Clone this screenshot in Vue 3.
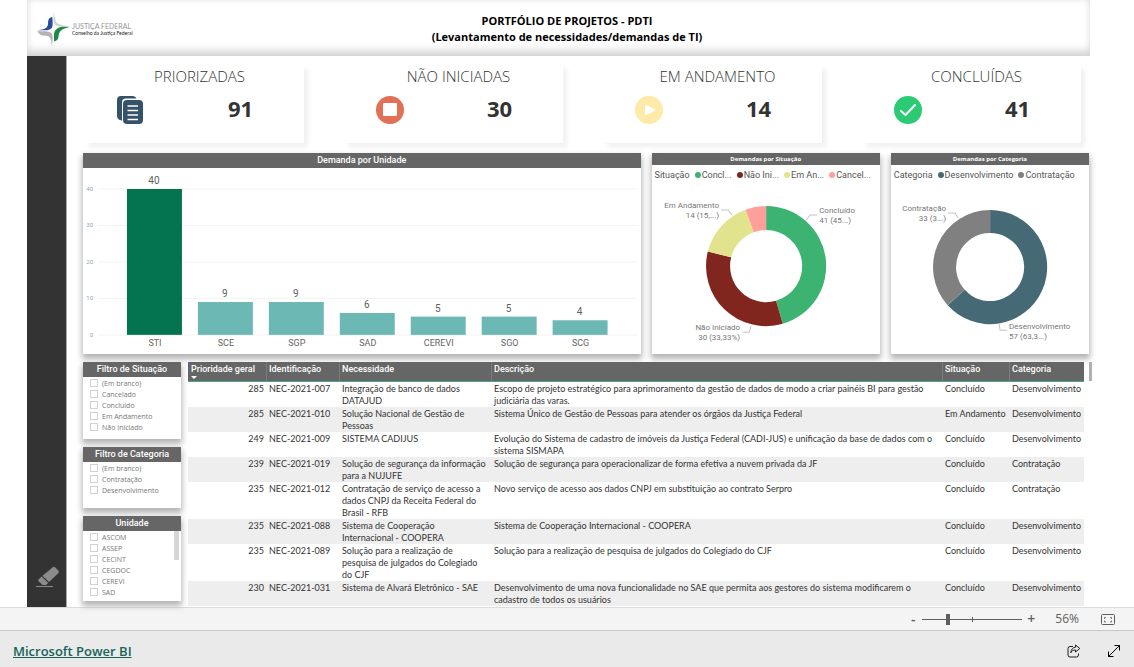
<script setup>
import { ref } from 'vue'

const zoom = ref(25)

const kpis = [
  { label: 'PRIORIZADAS', value: 91, icon: 'docs' },
  { label: 'NÃO INICIADAS', value: 30, icon: 'stop' },
  { label: 'EM ANDAMENTO', value: 14, icon: 'play' },
  { label: 'CONCLUÍDAS', value: 41, icon: 'check' },
]

const units = [
  ['STI', 40], ['SCE', 9], ['SGP', 9], ['SAD', 6], ['CEREVI', 5], ['SGO', 5], ['SCG', 4],
]
const baseY = 167
const yOf = (v) => baseY - v * 3.65
const bars = units.map(([name, value], i) => ({
  name, value, x: 44 + i * 71, y: yOf(value), h: value * 3.65, fill: i === 0 ? '#04734f' : '#6bb8b4',
}))
const ticks = [0, 10, 20, 30, 40]

function ring(cx, cy, outer, inner, slices) {
  const total = slices.reduce((sum, s) => sum + s.value, 0)
  let acc = 0
  const point = (r, t) => {
    const a = t * 2 * Math.PI
    return `${(cx + r * Math.sin(a)).toFixed(2)} ${(cy - r * Math.cos(a)).toFixed(2)}`
  }
  return slices.map((s) => {
    const from = acc / total
    acc += s.value
    const to = acc / total
    const large = to - from > 0.5 ? 1 : 0
    return {
      fill: s.color,
      d: `M${point(outer, from)}A${outer} ${outer} 0 ${large} 1 ${point(outer, to)}L${point(inner, to)}A${inner} ${inner} 0 ${large} 0 ${point(inner, from)}Z`,
    }
  })
}

const statusSlices = [
  { short: 'Concl...', value: 41, color: '#3cb371' },
  { short: 'Não Ini...', value: 30, color: '#80261f' },
  { short: 'Em An...', value: 14, color: '#e1e48c' },
  { short: 'Cancel...', value: 5, color: '#ff9f9c' },
]
const categorySlices = [
  { short: 'Desenvolvimento', value: 57, color: '#456a76' },
  { short: 'Contratação', value: 33, color: '#808080' },
]

const donuts = [
  {
    title: 'Demandas por Situação', legend: 'Situação', slices: statusSlices, width: 228,
    arcs: ring(114, 81, 60, 36, statusSlices),
    lines: ['69,25 76,25 80,30', '165,30 158,30 154,35', '91,147 97,147 99,141'],
    labels: [
      { x: 67, y: 23, anchor: 'end', text: ['Em Andamento', '14 (15,...)'] },
      { x: 167, y: 28, anchor: 'start', text: ['Concluído', '41 (45...)'] },
      { x: 88, y: 145, anchor: 'end', text: ['Não Iniciado', '30 (33,33%)'] },
    ],
  },
  {
    title: 'Demandas por Categoria', legend: 'Categoria', slices: categorySlices, width: 198,
    arcs: ring(99, 82, 57, 34, categorySlices),
    lines: ['57,28 64,28 67,33', '108,139 109,145 116,145'],
    labels: [
      { x: 55, y: 26, anchor: 'end', text: ['Contratação', '33 (3...)'] },
      { x: 118, y: 144, anchor: 'start', text: ['Desenvolvimento', '57 (63,3...)'] },
    ],
  },
]

const slicers = [
  { id: 'situacao', title: 'Filtro de Situação', items: ['(Em branco)', 'Cancelado', 'Concluido', 'Em Andamento', 'Não Iniciado'] },
  { id: 'categoria', title: 'Filtro de Categoria', items: ['(Em branco)', 'Contratação', 'Desenvolvimento'] },
  { id: 'unidade', title: 'Unidade', items: ['ASCOM', 'ASSEP', 'CECINT', 'CEGDOC', 'CEREVI', 'SAD'], scroll: true },
]

const rows = [
  [285, 'NEC-2021-007', 'Integração de banco de dados\nDATAJUD', 'Escopo de projeto estratégico para aprimoramento da gestão de dados de modo a criar painéis BI para gestão\njudiciária das varas.', 'Concluído', 'Desenvolvimento'],
  [285, 'NEC-2021-010', 'Solução Nacional de Gestão de\nPessoas', 'Sistema Único de Gestão de Pessoas para atender os órgãos da Justiça Federal', 'Em Andamento', 'Desenvolvimento'],
  [249, 'NEC-2021-009', 'SISTEMA CADIJUS', 'Evolução do Sistema de cadastro de imóveis da Justiça Federal (CADI-JUS) e unificação da base de dados com o\nsistema SISMAPA', 'Concluído', 'Desenvolvimento'],
  [239, 'NEC-2021-019', 'Solução de segurança da informação\npara a NUJUFE', 'Solução de segurança para operacionalizar de forma efetiva a nuvem privada da JF', 'Concluído', 'Contratação'],
  [235, 'NEC-2021-012', 'Contratação de serviço de acesso a\ndados CNPJ da Receita Federal do\nBrasil - RFB', 'Novo serviço de acesso aos dados CNPJ em substituição ao contrato Serpro', 'Concluído', 'Contratação'],
  [235, 'NEC-2021-088', 'Sistema de Cooperação\nInternacional - COOPERA', 'Sistema de Cooperação Internacional - COOPERA', 'Concluído', 'Desenvolvimento'],
  [235, 'NEC-2021-089', 'Solução para a realização de\npesquisa de julgados do Colegiado\ndo CJF', 'Solução para a realização de pesquisa de julgados do Colegiado do CJF', 'Concluído', 'Desenvolvimento'],
  [230, 'NEC-2021-031', 'Sistema de Alvará Eletrônico - SAE', 'Desenvolvimento de uma nova funcionalidade no SAE que permita aos gestores do sistema modificarem o\ncadastro de todos os usuários', 'Concluído', 'Desenvolvimento'],
]
</script>

<template>
  <div class="viewer">
    <div class="report">
      <header class="banner">
        <div class="brand">
          <svg class="brand-mark" viewBox="108 30 102 110" aria-hidden="true">
            <path fill="#2c4b9b" d="M157 48C148 50 144 54 144 66C144 81 137 86 112 89H136C152 89 158 83 158 70Z" />
            <path fill="#d4d4d4" d="M161 32L165 52C166 66 174 72 206 77H180C165 76 160 70 160 56Z" />
            <path fill="#1c8a44" d="M207 78H186C170 81 162 90 162 104V123C172 121 175 116 176 107C177 94 183 86 207 80Z" />
            <path fill="#b3b3b3" d="M110 92H134C152 93 158 98 158 112L156 138L153 122C152 108 146 105 122 104Z" />
          </svg>
          <div class="brand-text">
            <span class="brand-name">JUSTIÇA FEDERAL</span>
            <span class="brand-sub">Conselho da Justiça Federal</span>
          </div>
        </div>
        <h1 class="title">PORTFÓLIO DE PROJETOS - PDTI<br />(Levantamento de necessidades/demandas de TI)</h1>
      </header>

      <div class="body">
        <nav class="rail">
          <button class="eraser" type="button" aria-label="Limpar filtros">
            <svg viewBox="0 0 24 22">
              <path fill="#8b8b8b" d="M16.500 1.500a2 2 0 0 1 2.800 0l3 3a2 2 0 0 1 0 2.800L13 16L6.500 9.800Z" />
              <path fill="#8b8b8b" d="M5.700 10.600L12.200 16.900L10 19H6.500L2.700 15.300a1.500 1.500 0 0 1 0-2.100Z" />
              <path stroke="#8b8b8b" d="M0 20.500H17" />
            </svg>
          </button>
        </nav>

        <main class="canvas">
          <section class="kpis">
            <article v-for="k in kpis" :key="k.label" class="kpi">
              <h2 class="kpi-label">{{ k.label }}</h2>
              <svg v-if="k.icon === 'docs'" class="kpi-icon" viewBox="0 0 28 28">
                <path fill="#34526a" d="M4 0H16a4 4 0 0 1 3.500 2.500H9a4 4 0 0 0-4 4V24.500A4.500 4.500 0 0 1 0 20V4A4 4 0 0 1 4 0Z" />
                <rect fill="#34526a" x="6" y="4" width="20" height="24" rx="4" />
                <path stroke="#fff" stroke-width="1.500" d="M10.500 10H21M10.500 14.500H21M10.500 19H21M10.500 23.500H21" />
              </svg>
              <svg v-else-if="k.icon === 'stop'" class="kpi-icon" viewBox="0 0 28 28">
                <circle fill="#e17055" cx="14" cy="14" r="14" />
                <rect fill="#fff" x="7" y="7" width="14" height="13" rx="1" />
              </svg>
              <svg v-else-if="k.icon === 'play'" class="kpi-icon" viewBox="0 0 28 28">
                <circle fill="#ffeaa7" cx="14" cy="14" r="14" />
                <path fill="#fff" d="M10 10a1 1 0 0 1 1.500-1L19.500 13a1 1 0 0 1 0 1.800L11.500 19a1 1 0 0 1-1.500-1Z" />
              </svg>
              <svg v-else class="kpi-icon" viewBox="0 0 28 28">
                <circle fill="#2bcb73" cx="14" cy="14" r="14" />
                <path fill="none" stroke="#fff" stroke-width="2" stroke-linecap="round" stroke-linejoin="round" d="M7 15L11.500 19L21 9" />
              </svg>
              <strong class="kpi-value">{{ k.value }}</strong>
            </article>
          </section>

          <section class="charts">
            <article class="card">
              <h3 class="card-title">Demanda por Unidade</h3>
              <svg class="plot" viewBox="0 0 558 186" role="img" aria-label="Demanda por Unidade">
                <g v-for="t in ticks" :key="t">
                  <line x1="15" x2="555" :y1="yOf(t)" :y2="yOf(t)" stroke="#f3f3f3" />
                  <text class="tick" x="10" :y="yOf(t) + 2" text-anchor="end">{{ t }}</text>
                </g>
                <g v-for="b in bars" :key="b.name">
                  <rect :x="b.x" :y="b.y" width="55" :height="b.h" :fill="b.fill" />
                  <text class="bar-value" :x="b.x + 27" :y="b.y - 5" text-anchor="middle">{{ b.value }}</text>
                  <text class="bar-name" :x="b.x + 28" y="178" text-anchor="middle">{{ b.name }}</text>
                </g>
              </svg>
            </article>

            <article v-for="d in donuts" :key="d.title" class="card">
              <h3 class="card-title card-title--small">{{ d.title }}</h3>
              <div class="legend">
                <span class="legend-title">{{ d.legend }}</span>
                <span v-for="s in d.slices" :key="s.short" class="legend-item">
                  <svg class="dot" viewBox="0 0 6 6"><circle cx="3" cy="3" r="3" :fill="s.color" /></svg>{{ s.short }}
                </span>
              </div>
              <svg class="plot" :viewBox="`0 0 ${d.width} 168`" role="img" :aria-label="d.title">
                <path v-for="a in d.arcs" :key="a.d" :d="a.d" :fill="a.fill" />
                <polyline v-for="l in d.lines" :key="l" :points="l" fill="none" stroke="#c4c4c4" />
                <text v-for="t in d.labels" :key="t.text[0]" class="slice-label" :text-anchor="t.anchor">
                  <tspan :x="t.x" :y="t.y">{{ t.text[0] }}</tspan>
                  <tspan :x="t.x" :y="t.y + 10">{{ t.text[1] }}</tspan>
                </text>
              </svg>
            </article>
          </section>

          <section class="details">
            <aside class="slicers">
              <fieldset v-for="s in slicers" :key="s.id" class="slicer card" :class="`slicer--${s.id}`">
                <legend class="card-title">{{ s.title }}</legend>
                <div class="slicer-list">
                  <label v-for="item in s.items" :key="item" class="option">
                    <input type="checkbox" :name="s.id" :value="item" />{{ item }}
                  </label>
                  <span v-if="s.scroll" class="slicer-thumb"></span>
                </div>
              </fieldset>
            </aside>

            <table class="grid">
              <colgroup>
                <col class="c-priority" /><col class="c-id" /><col class="c-need" /><col /><col class="c-status" /><col class="c-category" />
              </colgroup>
              <thead>
                <tr>
                  <th>Prioridade geral<svg class="sort" viewBox="0 0 6 3"><path fill="#fff" d="M0 0H6L3 3Z" /></svg></th>
                  <th>Identificação</th><th>Necessidade</th><th>Descrição</th><th>Situação</th><th>Categoria</th>
                </tr>
              </thead>
              <tbody>
                <tr v-for="r in rows" :key="r[1]">
                  <td v-for="(cell, i) in r" :key="i">{{ cell }}</td>
                </tr>
              </tbody>
            </table>
            <span class="grid-thumb"></span>
          </section>
        </main>
      </div>
    </div>

    <div class="zoombar">
      <button type="button" class="step" aria-label="Reduzir">-</button>
      <input v-model="zoom" class="slider" type="range" min="0" max="100" aria-label="Zoom" />
      <button type="button" class="step" aria-label="Ampliar">+</button>
      <span class="percent">56%</span>
      <button type="button" class="fit" aria-label="Ajustar à página">
        <svg viewBox="0 0 14 11" fill="none" stroke="#605e5c">
          <rect x="0.500" y="0.500" width="13" height="10" rx="1" />
          <path d="M5 3.500H3.500V5M9 3.500H10.500V5M3.500 6.500V8H5M10.500 6.500V8H9" stroke-width="0.800" />
        </svg>
      </button>
    </div>

    <footer class="footer">
      <a class="powerbi" href="#">Microsoft Power BI</a>
      <button type="button" class="tool" aria-label="Compartilhar">
        <svg viewBox="0 0 14 14" fill="none" stroke="#1f1a24">
          <path d="M6 2.500H3A2 2 0 0 0 1 4.500V11A2 2 0 0 0 3 13H9.500A2 2 0 0 0 11.500 11V9.500" />
          <path d="M8.500 1L12.800 4.500L8.500 8V6C6 6 4.800 6.800 3.800 8.800C4 5.500 5.800 3.400 8.500 3.200Z" />
        </svg>
      </button>
      <button type="button" class="tool" aria-label="Tela inteira">
        <svg viewBox="0 0 14 14" fill="none" stroke="#000">
          <path d="M1.500 12.500L12.500 1.500M7.500 1.500H12.500V6.500M1.500 7.500V12.500H6.500" />
        </svg>
      </button>
    </footer>
  </div>
</template>

<style>
body {
  background: #fff;
}
</style>

<style scoped>
.viewer {
  font-family: Roboto, "Liberation Sans", sans-serif;
  font-size: 9px;
  line-height: 12px;
  color: #333;
}
.viewer * {
  box-sizing: border-box;
}
button {
  display: block;
  padding: 0;
  border: 0;
  background: none;
  font: inherit;
  color: inherit;
}
h1, h2, h3 {
  margin: 0;
}
svg {
  display: block;
}
.report {
  margin: 0 44px 0 27px;
}
.banner {
  display: grid;
  grid-template-columns: 107px 1fr 90px;
  align-items: center;
  height: 56px;
  padding-top: 2px;
  box-shadow: inset 0 -8px 10px -3px #d2d2d2, inset 0 0 6px #e6e6e6;
}
.brand {
  display: flex;
  align-items: center;
  gap: 2px;
  padding-left: 9px;
}
.brand-mark {
  flex: none;
  width: 34px;
  height: 36px;
}
.brand-text {
  display: flex;
  flex-direction: column;
  white-space: nowrap;
}
.brand-name {
  font: 7px/8px Lato, sans-serif;
  color: #999;
}
.brand-sub {
  font: 5px/6px Lato, sans-serif;
  color: #222;
}
.title {
  font: 700 11px/16px "Open Sans", sans-serif;
  color: #000;
  text-align: center;
}
.body {
  display: flex;
}
.rail {
  flex: none;
  display: flex;
  align-items: flex-end;
  width: 40px;
  padding: 0 0 19px 9px;
  background: #333;
  border-right: 1px solid #a8a8a8;
}
.eraser svg {
  width: 24px;
  height: 22px;
}
.canvas {
  flex: 1;
  min-width: 0;
  padding: 7px 1px 1px 16px;
}
.kpis {
  display: grid;
  grid-template-columns: repeat(4, 1fr);
  gap: 38px;
  padding-right: 8px;
  margin-bottom: 10px;
}
.kpi {
  display: grid;
  grid-template-columns: 28px 1fr;
  align-items: center;
  row-gap: 9px;
  padding: 3px 22px 19px 34px;
  box-shadow: 5px 5px 5px -1px #f0f0f0;
}
.kpi-label {
  grid-column: 1 / -1;
  font: 300 15px/21px "Open Sans", sans-serif;
  text-align: center;
}
.kpi-icon {
  width: 28px;
  height: 28px;
}
.kpi-value {
  padding-left: 54px;
  font: 700 22px/24px "Open Sans", sans-serif;
  text-align: center;
  align-self: start;
}
.charts {
  display: grid;
  grid-template-columns: minmax(0, 557fr) minmax(0, 228fr) minmax(0, 198fr);
  gap: 11px;
  margin-bottom: 8px;
}
.card {
  background: #fff;
  box-shadow: 0 4px 6px 1px #b4b4b4;
}
.card-title {
  background: #666;
  color: #fff;
  font-size: 9px;
  font-weight: 500;
  line-height: 15px;
  text-align: center;
}
.card-title--small {
  font: 700 6px/12px "Open Sans", sans-serif;
}
.plot {
  width: 100%;
  height: auto;
}
.tick {
  font-size: 6px;
  fill: #8ea3b8;
}
.bar-value {
  font-size: 10px;
  fill: #605e5c;
}
.bar-name {
  font-size: 9px;
  fill: #666;
}
.slice-label {
  font-size: 8px;
  fill: #777;
}
.legend {
  display: flex;
  align-items: center;
  gap: 5px;
  height: 20px;
  padding-left: 3px;
  color: #555;
  white-space: nowrap;
}
.legend-item {
  display: flex;
  align-items: center;
  gap: 1px;
}
.dot {
  width: 6px;
  height: 6px;
}
.details {
  display: flex;
  align-items: flex-start;
  margin-right: -3px;
}
.slicers {
  flex: none;
  display: flex;
  flex-direction: column;
  gap: 8px;
  width: 98px;
  margin-right: 7px;
}
.slicer {
  min-width: 0;
  min-height: 61px;
  margin: 0;
  padding: 0;
  border: 0;
}
.slicer--situacao {
  min-height: 77px;
}
.slicer .card-title {
  float: left;
  width: 100%;
  padding: 0;
}
.slicer-list {
  position: relative;
  clear: both;
  padding: 1px 7px 3px;
}
.option {
  display: flex;
  align-items: center;
  gap: 4px;
  font: 7px/11px "Open Sans", sans-serif;
  color: #777;
}
.option input {
  appearance: none;
  width: 8px;
  height: 8px;
  margin: 0;
  border: 1px solid #d2d2d2;
  border-radius: 0;
  background: #fff;
}
.slicer-thumb {
  position: absolute;
  top: 0;
  right: 2px;
  width: 5px;
  height: 29px;
  background: #d6d6d6;
}
.grid {
  flex: 1;
  min-width: 0;
  table-layout: fixed;
  border-collapse: collapse;
}
.c-priority { width: 78px; }
.c-id { width: 73px; }
.c-need { width: 152px; }
.c-status { width: 67px; }
.c-category { width: 75px; }
.grid th {
  position: relative;
  height: 20px;
  padding: 1px 0 6px 3px;
  background: #666;
  border-bottom: 1px solid #4aa58f;
  color: #fff;
  font-weight: 500;
  text-align: left;
  vertical-align: top;
}
.grid th + th {
  box-shadow: inset 1px 0 #7c7c7c;
}
.sort {
  position: absolute;
  left: 3px;
  bottom: 2px;
  width: 6px;
  height: 3px;
}
.grid td {
  height: 25px;
  padding: 1px 0 0 3px;
  font-family: Lato, sans-serif;
  vertical-align: top;
  white-space: pre-line;
}
.grid td:first-child {
  padding-right: 2px;
  text-align: right;
}
.grid tbody tr:nth-child(even) {
  background: #eee;
}
.grid-thumb {
  flex: none;
  width: 3px;
  height: 19px;
  margin-left: 5px;
  background: #b0b0b0;
}
.zoombar {
  display: flex;
  align-items: center;
  justify-content: flex-end;
  height: 24px;
  padding-right: 19px;
  background: #f4f4f4;
  border-top: 1px solid #dcdcdc;
  border-bottom: 1px solid #c8c8c8;
  color: #605e5c;
}
.step {
  width: 8px;
  margin: 0 5px;
  font: 600 14px/20px "Open Sans", sans-serif;
}
.slider {
  appearance: none;
  width: 100px;
  height: 12px;
  margin: 0;
  background:
    linear-gradient(#605e5c, #605e5c) center / 1px 5px no-repeat,
    linear-gradient(#605e5c, #605e5c) center / 100% 1px no-repeat;
}
.slider::-webkit-slider-thumb {
  appearance: none;
  width: 4px;
  height: 11px;
  background: #605e5c;
}
.percent {
  margin: 0 22px 0 15px;
  font: 12px/20px "Open Sans", sans-serif;
}
.fit svg {
  width: 14px;
  height: 11px;
}
.footer {
  display: flex;
  align-items: center;
  gap: 26px;
  height: 36px;
  padding: 4px 13px 0;
  background: #eaeaea;
}
.powerbi {
  margin-right: auto;
  font: 600 13px/20px "Open Sans", sans-serif;
  color: #17635a;
}
.tool svg {
  width: 14px;
  height: 14px;
}
</style>
